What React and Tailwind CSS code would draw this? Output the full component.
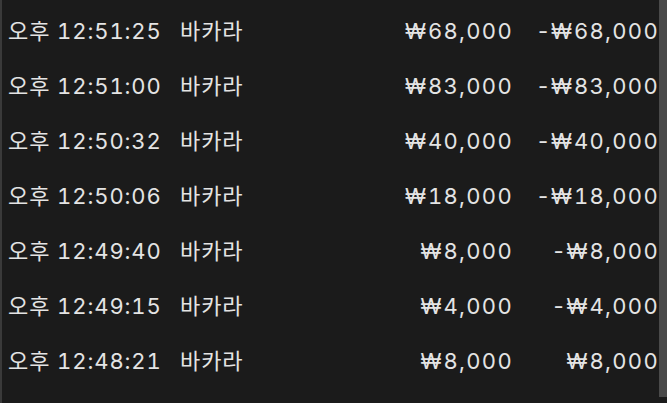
import React from 'react';

const rows = [
  { time: '오후 12:51:25', game: '바카라', bet: '68,000', net: '68,000', minus: true },
  { time: '오후 12:51:00', game: '바카라', bet: '83,000', net: '83,000', minus: true },
  { time: '오후 12:50:32', game: '바카라', bet: '40,000', net: '40,000', minus: true },
  { time: '오후 12:50:06', game: '바카라', bet: '18,000', net: '18,000', minus: true },
  { time: '오후 12:49:40', game: '바카라', bet: '8,000', net: '8,000', minus: true },
  { time: '오후 12:49:15', game: '바카라', bet: '4,000', net: '4,000', minus: true },
  { time: '오후 12:48:21', game: '바카라', bet: '8,000', net: '8,000', minus: false },
];

function Won({ value, minus }) {
  return (
    <span className="text-right tracking-[1.3px]">
      {minus && <span className="inline-block w-[13px] text-left">-</span>}
      <span className="inline-block w-[25px] text-center tracking-normal">₩</span>
      {value}
    </span>
  );
}

export default function App() {
  return (
    <div className="flex h-[403px] w-[667px] overflow-hidden bg-[#1b1b1b] text-[#e4e4e4] font-['Inter','Noto_Sans_CJK_KR',sans-serif]">
      {/* 왼쪽 테두리 */}
      <div className="w-[2px] bg-[#3a3a3a]" />

      {/* 목록 */}
      <div className="flex-1 pl-[6px] pt-[3px]">
        {rows.map((r, i) => (
          <div
            key={i}
            className="grid h-[55px] grid-cols-[172px_200px_133px_146px] items-center text-[22px] leading-none tabular-nums tracking-[0.9px]"
          >
            <span>{r.time}</span>
            <span>{r.game}</span>
            <Won value={r.bet} />
            <Won value={r.net} minus={r.minus} />
          </div>
        ))}
      </div>

      {/* 스크롤바 */}
      <div className="h-[397px] w-[8px] bg-[#4a4a4a]" />
    </div>
  );
}
